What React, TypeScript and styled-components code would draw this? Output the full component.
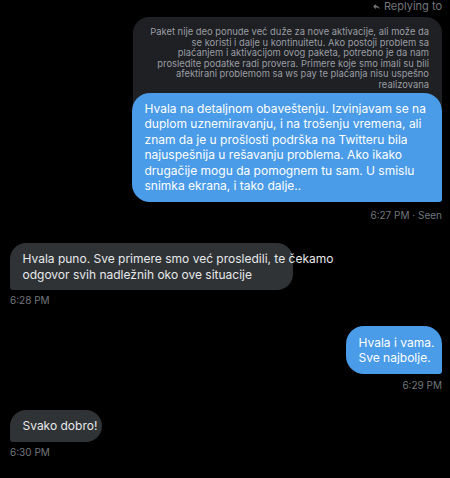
import styled, { createGlobalStyle } from "styled-components";

const GlobalStyle = createGlobalStyle`
  html, body {
    margin: 0;
    padding: 0;
    background: #000;
  }
  body {
    font-family: Inter, "Noto Sans", sans-serif;
    -webkit-font-smoothing: antialiased;
  }
`;

const Thread = styled.div`
  width: 450px;
  height: 478px;
  box-sizing: border-box;
  padding: 0 8px 0 10px;
  display: flex;
  flex-direction: column;
  overflow: hidden;
`;

const Group = styled.div<{ $mine?: boolean; $gap?: number }>`
  display: flex;
  flex-direction: column;
  align-items: ${(p) => (p.$mine ? "flex-end" : "flex-start")};
  margin-top: ${(p) => p.$gap ?? 0}px;
`;

const ReplyingTo = styled.div`
  display: flex;
  align-items: center;
  gap: 3px;
  height: 12px;
  font-size: 11px;
  line-height: 12px;
  color: #71767b;

  svg {
    width: 9px;
    height: 9px;
    fill: #71767b;
  }
`;

const Quote = styled.div`
  box-sizing: border-box;
  width: 309px;
  margin-top: 5px;
  padding: 10px 13px 14px;
  background: #1e2024;
  border-radius: 16px 16px 0 0;
  color: #9a9da2;
  font-size: 9.4px;
  line-height: 10.6px;
  text-align: right;
  white-space: nowrap;
`;

const Bubble = styled.div<{ $mine?: boolean; $width: number; $overlap?: boolean }>`
  box-sizing: border-box;
  width: ${(p) => p.$width}px;
  padding: 8.5px 12.5px;
  margin-top: ${(p) => (p.$overlap ? -12 : 0)}px;
  background: ${(p) => (p.$mine ? "#4a9be8" : "#2f3336")};
  color: ${(p) => (p.$mine ? "#fff" : "#e7e9ea")};
  border-radius: ${(p) => (p.$mine ? "18px 18px 3px 18px" : "16px 16px 16px 3px")};
  font-size: 12px;
  line-height: 15.4px;
  white-space: nowrap;
`;

const Meta = styled.div<{ $gap: number }>`
  margin-top: ${(p) => p.$gap}px;
  font-size: 10px;
  line-height: 12px;
  color: #71767b;
`;

const ReplyIcon = () => (
  <svg viewBox="0 0 24 24" aria-hidden="true">
    <path d="M10 9V5l-7 7 7 7v-4.1c5 0 8.5 1.6 11 5.1-1-5-4-10-11-11z" />
  </svg>
);

export default function App() {
  return (
    <>
      <GlobalStyle />
      <Thread>
        <Group $mine>
          <ReplyingTo>
            <ReplyIcon />
            Replying to
          </ReplyingTo>
          <Quote>
            Paket nije deo ponude već duže za nove aktivacije, ali može da
            <br />
            se koristi i dalje u kontinuitetu. Ako postoji problem sa
            <br />
            plaćanjem i aktivacijom ovog paketa, potrebno je da nam
            <br />
            prosledite podatke radi provera. Primere koje smo imali su bili
            <br />
            afektirani problemom sa ws pay te plaćanja nisu uspešno
            <br />
            realizovana
          </Quote>
          <Bubble $mine $overlap $width={310}>
            Hvala na detaljnom obaveštenju. Izvinjavam se na
            <br />
            duplom uznemiravanju, i na trošenju vremena, ali
            <br />
            znam da je u prošlosti podrška na Twitteru bila
            <br />
            najuspešnija u rešavanju problema. Ako ikako
            <br />
            drugačije mogu da pomognem tu sam. U smislu
            <br />
            snimka ekrana, i tako dalje..
          </Bubble>
          <Meta $gap={7}>6:27 PM · Seen</Meta>
        </Group>

        <Group $gap={21.6}>
          <Bubble $width={283}>
            Hvala puno. Sve primere smo već prosledili, te čekamo
            <br />
            odgovor svih nadležnih oko ove situacije
          </Bubble>
          <Meta $gap={4}>6:28 PM</Meta>
        </Group>

        <Group $mine $gap={19.7}>
          <Bubble $mine $width={96}>
            Hvala i vama.
            <br />
            Sve najbolje.
          </Bubble>
          <Meta $gap={5}>6:29 PM</Meta>
        </Group>

        <Group $gap={19}>
          <Bubble $width={92}>Svako dobro!</Bubble>
          <Meta $gap={4}>6:30 PM</Meta>
        </Group>
      </Thread>
    </>
  );
}
